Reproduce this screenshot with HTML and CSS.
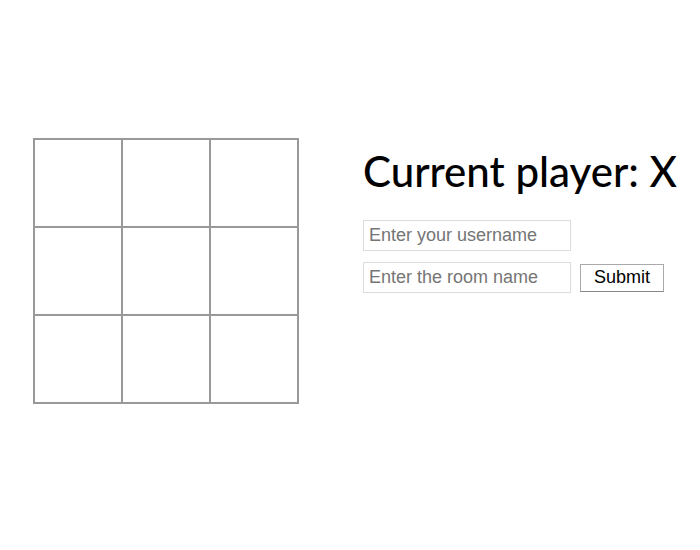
FILE: index.html
```html
<!DOCTYPE html>
<html>
<head>
<meta charset="utf-8">
<link rel="stylesheet" href="styles.css">
</head>
<body>
<div class="app">
  <div class="board">
    <div class="cell"></div><div class="cell"></div><div class="cell"></div>
    <div class="cell"></div><div class="cell"></div><div class="cell"></div>
    <div class="cell"></div><div class="cell"></div><div class="cell"></div>
  </div>
  <div class="side">
    <h1 class="status">Current player: X</h1>
    <form class="join">
      <div class="row"><input class="field" type="text" placeholder="Enter your username"></div>
      <div class="row"><input class="field" type="text" placeholder="Enter the room name"><button class="submit" type="button">Submit</button></div>
    </form>
  </div>
</div>
</body>
</html>
```

FILE: styles.css
```css
html, body {
  margin: 0;
  padding: 0;
  background: #fff;
}
.app {
  display: flex;
  align-items: flex-start;
  padding: 138px 0 0 33px;
  gap: 64px;
}
.board {
  display: grid;
  grid-template-columns: repeat(3, 88px);
  grid-template-rows: repeat(3, 88px);
  border: 1px solid #999;
}
.cell {
  border: 1px solid #999;
  box-sizing: border-box;
}
.side {
  display: flex;
  flex-direction: column;
}
.status {
  margin: 5px 0 0 0;
  font-family: "Lato", "DejaVu Sans", sans-serif;
  font-weight: 500;
  font-size: 42px;
  line-height: 56px;
  color: #000;
}
.join {
  margin-top: 21px;
  display: flex;
  flex-direction: column;
  gap: 11px;
}
.row {
  display: flex;
  align-items: center;
  gap: 9px;
}
.field {
  width: 208px;
  height: 31px;
  box-sizing: border-box;
  border: 1px solid #dcdcdc;
  padding: 0 5px;
  font-family: "Liberation Sans", Arial, sans-serif;
  font-size: 18px;
  color: #000;
  outline: none;
}
.field::placeholder {
  color: #757575;
}
.submit {
  height: 28px;
  width: 84px;
  box-sizing: border-box;
  background: #fff;
  border: 1px solid #aaa;
  border-bottom-color: #888;
  font-family: "Liberation Sans", Arial, sans-serif;
  font-size: 18px;
  color: #000;
  padding: 0;
}
```
